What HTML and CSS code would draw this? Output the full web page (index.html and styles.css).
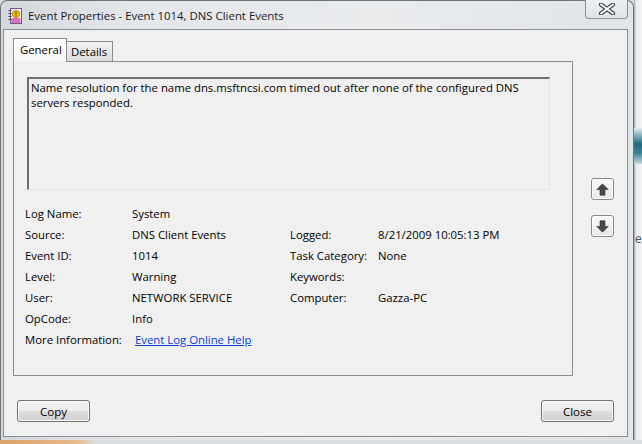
FILE: index.html
```html
<!DOCTYPE html>
<html>
<head>
<meta charset="utf-8">
<link rel="stylesheet" href="styles.css">
</head>
<body>
<div class="screen">
  <div class="window">
    <div class="titlebar">
      <svg class="app-icon" width="15" height="16" viewBox="0 0 15 16">
        <rect x="2.5" y="0.5" width="11" height="15" fill="#f4f1f6" stroke="#6b5a86"/>
        <rect x="3.5" y="10" width="9" height="5" fill="#d86fb8"/>
        <circle cx="8" cy="6" r="3.6" fill="#f5c400" stroke="#a07800" stroke-width="0.8"/>
        <rect x="7.4" y="3.8" width="1.2" height="2.8" fill="#5a3a00"/>
        <rect x="7.4" y="7.3" width="1.2" height="1.1" fill="#5a3a00"/>
        <g stroke="#444" stroke-width="1">
          <line x1="0.5" y1="2.5" x2="3.5" y2="2.5"/>
          <line x1="0.5" y1="5.5" x2="3.5" y2="5.5"/>
          <line x1="0.5" y1="8.5" x2="3.5" y2="8.5"/>
          <line x1="0.5" y1="11.5" x2="3.5" y2="11.5"/>
        </g>
      </svg>
      <span class="title">Event Properties - Event 1014, DNS Client Events</span>
      <div class="close-x">
        <svg width="18" height="12" viewBox="0 0 18 12">
          <path d="M3 1.5 L15 10.5 M15 1.5 L3 10.5" stroke="#3f4347" stroke-width="4.2" stroke-linecap="round"/>
          <path d="M3 1.5 L15 10.5 M15 1.5 L3 10.5" stroke="#ffffff" stroke-width="2" stroke-linecap="round"/>
        </svg>
      </div>
    </div>
    <div class="client">
      <div class="main">
        <div class="tabbox">
          <div class="tabs">
            <div class="tab active">General</div>
            <div class="tab">Details</div>
          </div>
          <div class="panel">
            <div class="desc">Name resolution for the name dns.msftncsi.com timed out after none of the configured DNS servers responded.</div>
            <div class="props">
              <div class="lbl">Log Name:</div><div class="val">System</div><div></div><div></div>
              <div class="lbl">Source:</div><div class="val">DNS Client Events</div><div class="lbl">Logged:</div><div class="val">8/21/2009 10:05:13 PM</div>
              <div class="lbl">Event ID:</div><div class="val">1014</div><div class="lbl">Task Category:</div><div class="val">None</div>
              <div class="lbl">Level:</div><div class="val">Warning</div><div class="lbl">Keywords:</div><div class="val"></div>
              <div class="lbl">User:</div><div class="val">NETWORK SERVICE</div><div class="lbl">Computer:</div><div class="val">Gazza-PC</div>
              <div class="lbl">OpCode:</div><div class="val">Info</div><div></div><div></div>
              <div class="lbl">More Information:</div><div class="val"><a class="link" href="#">Event Log Online Help</a></div><div></div><div></div>
            </div>
          </div>
        </div>
        <div class="arrows">
          <div class="arrow-btn">
            <svg width="13" height="13" viewBox="0 0 13 13"><path d="M6.5 0.8 L12.2 6.6 L9 6.6 L9 12.2 L4 12.2 L4 6.6 L0.8 6.6 Z" fill="#4a4a4a" stroke="#2e2e2e" stroke-width="0.6"/></svg>
          </div>
          <div class="arrow-btn">
            <svg width="13" height="13" viewBox="0 0 13 13"><path d="M6.5 12.2 L12.2 6.4 L9 6.4 L9 0.8 L4 0.8 L4 6.4 L0.8 6.4 Z" fill="#4a4a4a" stroke="#2e2e2e" stroke-width="0.6"/></svg>
          </div>
        </div>
      </div>
      <div class="buttons">
        <button class="btn">Copy</button>
        <button class="btn">Close</button>
      </div>
    </div>
  </div>
  <div class="desktop">
    <div class="teal"></div>
    <div class="glyph">e</div>
  </div>
</div>
<div class="taskstrip"></div>
</body>
</html>
```
FILE: styles.css
```css
html, body {
  margin: 0;
  padding: 0;
}
body {
  width: 642px;
  height: 444px;
  overflow: hidden;
  background: #d9dde0;
  font-family: "Open Sans", "Noto Sans", sans-serif;
  font-size: 11.35px;
  color: #000;
}
.screen {
  display: flex;
  height: 440px;
}
.window {
  width: 634px;
  height: 440px;
  box-sizing: border-box;
  border: 1px solid #6e7378;
  border-bottom: none;
  border-radius: 7px 7px 0 0;
  background: linear-gradient(90deg, #d3d8dc 0%, #e4e7ea 20%, #e9ebed 60%, #e2e5e8 100%);
  padding: 0 5px 3px 2px;
  display: flex;
  flex-direction: column;
  flex-shrink: 0;
}
.titlebar {
  height: 28px;
  display: flex;
  align-items: center;
  position: relative;
}
.app-icon {
  margin-left: 5px;
  margin-top: 1px;
}
.title {
  margin-left: 5px;
  font-size: 11.4px;
  color: #1a1a1a;
  margin-top: 1px;
}
.close-x {
  position: absolute;
  right: 0;
  top: -1px;
  width: 43px;
  height: 19px;
  box-sizing: border-box;
  border: 1px solid #8c9196;
  border-top: none;
  border-radius: 0 0 4px 4px;
  background: linear-gradient(#eef0f2, #dfe3e6);
  display: flex;
  align-items: center;
  justify-content: center;
}
.client {
  flex: 1;
  background: #f0f0f0;
  border: 1px solid #8a8e93;
  padding: 8px 13px 0 9px;
  display: flex;
  flex-direction: column;
}
.main {
  display: flex;
}
.tabbox {
  width: 560px;
  display: flex;
  flex-direction: column;
}
.tabs {
  display: flex;
  align-items: flex-end;
  height: 23px;
  position: relative;
  z-index: 1;
}
.tab {
  height: 20px;
  box-sizing: border-box;
  border: 1px solid #898c95;
  border-bottom: none;
  border-left: none;
  padding: 0 5px 0 4px;
  display: flex;
  align-items: center;
  background: linear-gradient(#f3f3f3, #dcdcdc);
}
.tab.active {
  height: 24px;
  margin-bottom: -1px;
  border-left: 1px solid #898c95;
  width: 54px;
  padding: 0 0 2px 6px;
  background: linear-gradient(#ffffff, #f6f6f6);
}
.panel {
  height: 315px;
  box-sizing: border-box;
  border: 1px solid #898c95;
  background: #f0f0f0;
  padding: 15px 0 0 11px;
}
.desc {
  width: 523px;
  height: 113px;
  box-sizing: border-box;
  margin-left: 2px;
  border-top: 2px solid #6f6f6f;
  border-left: 2px solid #6f6f6f;
  border-right: 1px solid #e3e3e3;
  border-bottom: 1px solid #e3e3e3;
  padding: 1px 2px;
  line-height: 15px;
}
.props {
  display: grid;
  grid-template-columns: 107px 158px 88px 1fr;
  grid-auto-rows: 21px;
  align-items: center;
  margin-top: 13px;
}
.link {
  color: #0b40d4;
  text-decoration: underline;
  margin-left: 3px;
}
.arrows {
  margin-left: 18px;
  margin-top: 140px;
  display: flex;
  flex-direction: column;
  gap: 15px;
}
.arrow-btn {
  width: 23px;
  height: 22px;
  box-sizing: border-box;
  border: 1px solid #8a8a8a;
  border-radius: 3px;
  background: linear-gradient(#fbfbfb, #e8e8e8);
  display: flex;
  align-items: center;
  justify-content: center;
  box-shadow: inset 0 0 0 1px #fcfcfc;
}
.buttons {
  display: flex;
  justify-content: space-between;
  margin-top: 24px;
  padding-left: 4px;
}
.btn {
  width: 73px;
  height: 22px;
  border: 1px solid #707070;
  border-radius: 3px;
  background: linear-gradient(#f2f2f2 0%, #ebebeb 50%, #dddddd 51%, #cfcfcf 100%);
  font-family: "Open Sans", "Noto Sans", sans-serif;
  font-size: 11.6px;
  color: #000;
  padding: 0;
  box-shadow: inset 0 0 0 1px #fafafa;
}
.desktop {
  flex: 1;
  background: linear-gradient(90deg, #9aa0a5 0px, #e9edf0 2px, #f2f4f5 100%);
  display: flex;
  flex-direction: column;
}
.teal {
  margin-top: 128px;
  height: 36px;
  background: linear-gradient(#e5ecef 0%, #6ea3b1 25%, #1f6a7c 45%, #3a8596 70%, #c7d8de 100%);
}
.glyph {
  margin-top: 66px;
  font-size: 12px;
  color: #555;
  margin-left: 1px;
}
.taskstrip {
  width: 95px;
  height: 4px;
  background: linear-gradient(90deg, #d7a26c, #e8b98a 80%, #d9dde0);
}
```
